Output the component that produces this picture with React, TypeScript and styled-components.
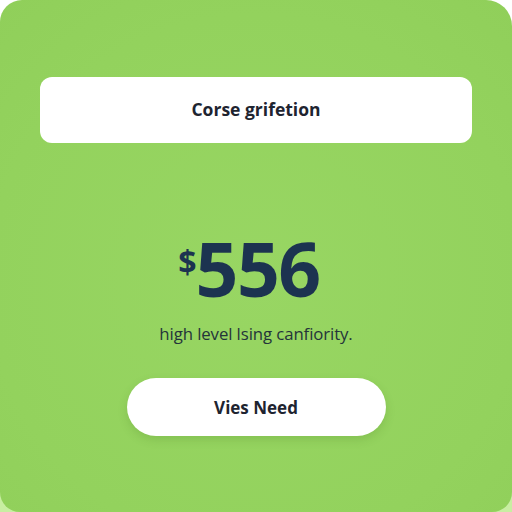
import { createGlobalStyle, styled } from "styled-components"

const GlobalStyle = createGlobalStyle`
  html, body {
    margin: 0;
    padding: 0;
    height: 100%;
    background: linear-gradient(to bottom, #ffffff 50%, #c8eea2 50%);
    font-family: "Open Sans", "Noto Sans", sans-serif;
  }
  #root {
    height: 100%;
  }
`

const Card = styled.div`
  box-sizing: border-box;
  width: 512px;
  height: 512px;
  background: radial-gradient(circle at 50% 55%, #98d663 0%, #93d25d 70%, #90cf5a 100%);
  border-radius: 22px 26px 20px 20px;
  display: flex;
  flex-direction: column;
  align-items: center;
  padding: 77px 40px 0;
`

const TitleBox = styled.div`
  box-sizing: border-box;
  width: 432px;
  height: 66px;
  padding-bottom: 2px;
  background: #ffffff;
  border-radius: 12px;
  display: flex;
  align-items: center;
  justify-content: center;
  font-size: 17.5px;
  font-weight: 700;
  color: #1e2430;
`

const Price = styled.div`
  margin-top: 88px;
  margin-right: 14px;
  display: flex;
  align-items: flex-start;
  color: #1c3350;
  font-weight: 700;
  line-height: 1;
`

const Currency = styled.span`
  font-size: 32px;
  margin-top: 15px;
  margin-right: -1px;
`

const Amount = styled.span`
  font-size: 75px;
  letter-spacing: -1.5px;
`

const Caption = styled.p`
  margin: 16px 0 0;
  font-size: 16.8px;
  letter-spacing: -0.1px;
  color: #24343a;
`

const PillButton = styled.button`
  margin-top: 33px;
  width: 259px;
  height: 58px;
  border: none;
  border-radius: 29px;
  background: #ffffff;
  box-shadow: 0 4px 10px rgba(60, 110, 30, 0.18);
  font-family: inherit;
  font-size: 17px;
  font-weight: 700;
  color: #1e2430;
  cursor: pointer;
`

export default function App() {
  return (
    <>
      <GlobalStyle />
      <Card>
        <TitleBox>Corse grifetion</TitleBox>
        <Price>
          <Currency>$</Currency>
          <Amount>556</Amount>
        </Price>
        <Caption>high level lsing canfiority.</Caption>
        <PillButton>Vies Need</PillButton>
      </Card>
    </>
  )
}
